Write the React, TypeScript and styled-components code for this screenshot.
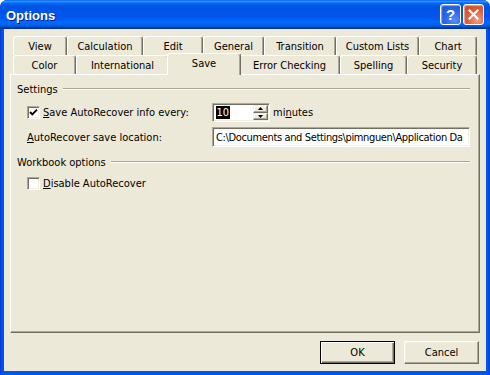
import React from "react";
import styled, { createGlobalStyle } from "styled-components";

const GlobalStyle = createGlobalStyle`
  html, body { margin: 0; padding: 0; background: #ffffff; }
  body {
    font-family: "DejaVu Sans Condensed", "DejaVu Sans", "Liberation Sans", sans-serif;
    font-size: 11px;
    color: #000;
  }
  * { box-sizing: border-box; }
`;

const Window = styled.div`
  width: 490px;
  height: 375px;
  display: flex;
  flex-direction: column;
  background: #0055ea;
  border-radius: 7px 7px 0 0;
  overflow: hidden;
`;

const TitleBar = styled.div`
  height: 29px;
  flex: none;
  display: flex;
  align-items: center;
  gap: 2px;
  padding: 0 6px 0 6px;
  background: linear-gradient(
    180deg,
    #0058ee 0%,
    #3593ff 4%,
    #288eff 6%,
    #127dff 8%,
    #036ffc 10%,
    #0262ee 14%,
    #0057e5 20%,
    #0054e3 24%,
    #0055eb 56%,
    #005bf5 66%,
    #026afe 76%,
    #0062ef 86%,
    #0052d6 92%,
    #0040ab 94%,
    #003092 100%
  );
`;

const TitleText = styled.div`
  flex: 1;
  color: #fff;
  font: bold 13px "Liberation Sans", Arial, sans-serif;
  text-shadow: 1px 1px 0 #0f1f8c;
  padding-top: 1px;
`;

const CaptionButton = styled.div<{ $kind: "help" | "close" }>`
  width: 21px;
  height: 21px;
  border: 1px solid #fff;
  border-radius: 3px;
  display: flex;
  align-items: center;
  justify-content: center;
  color: #fff;
  font: bold 15px "Liberation Sans", Arial, sans-serif;
  background: ${(p) =>
    p.$kind === "help"
      ? "radial-gradient(circle at 70% 80%, #5a8ef7 0%, #2c66ea 45%, #1d4fd8 100%)"
      : "radial-gradient(circle at 70% 80%, #f0a080 0%, #e2623c 45%, #c8401a 100%)"};
  box-shadow: inset 1px 1px 1px rgba(255, 255, 255, 0.5);
`;

const Frame = styled.div`
  flex: 1;
  min-width: 0;
  display: flex;
  padding: 0 4px 4px 4px;
  background: linear-gradient(90deg, #0831d9 0px, #0055ea 2px, #0055ea calc(100% - 2px), #0831d9 100%);
`;

const Client = styled.div`
  flex: 1;
  min-width: 0;
  display: flex;
  flex-direction: column;
  background: #ece9d8;
  padding: 7px 6px 0 6px;
`;

const TabStrip = styled.div`
  display: flex;
  flex-direction: column;
  padding: 0 3px;
`;

const TabRow = styled.div`
  display: flex;
  height: 19px;
`;

const Tab = styled.div<{ $w: number; $selected?: boolean }>`
  flex: none;
  width: ${(p) => (p.$selected ? p.$w + 4 : p.$w)}px;
  height: ${(p) => (p.$selected ? 22 : 19)}px;
  margin: ${(p) => (p.$selected ? "-2px -2px -1px -2px" : "0")};
  position: relative;
  z-index: ${(p) => (p.$selected ? 2 : 1)};
  display: flex;
  align-items: center;
  justify-content: center;
  padding-bottom: ${(p) => (p.$selected ? 2 : 0)}px;
  background: #ece9d8;
  border-top: 1px solid #fff;
  border-left: 1px solid #fff;
  border-right: 1px solid #716f64;
  border-radius: 3px 3px 0 0;
  box-shadow: inset -1px 0 0 #aca899;
  white-space: nowrap;
`;

const Panel = styled.div`
  flex: 1;
  min-width: 0;
  display: flex;
  flex-direction: column;
  border: 1px solid;
  border-color: #fff #716f64 #716f64 #fff;
  box-shadow: inset -1px -1px 0 #aca899;
  padding: 7px 9px 0 6px;
`;

const GroupHeader = styled.div<{ $top: number }>`
  display: flex;
  align-items: center;
  gap: 5px;
  height: 14px;
  margin-top: ${(p) => p.$top}px;
`;

const GroupLine = styled.div`
  flex: 1;
  height: 2px;
  border-top: 1px solid #aca899;
  border-bottom: 1px solid #fff;
`;

const FormRow = styled.div<{ $top: number; $h: number }>`
  display: flex;
  align-items: center;
  min-width: 0;
  padding-left: 10px;
  margin-top: ${(p) => p.$top}px;
  height: ${(p) => p.$h}px;
`;

const LabelCell = styled.div`
  width: 185px;
  flex: none;
  display: flex;
  align-items: center;
  gap: 3px;
  white-space: nowrap;
`;

const Label = styled.span`
  white-space: nowrap;
`;

const Key = styled.span`
  text-decoration: underline;
  text-underline-offset: 1px;
`;

const CheckBox = styled.div`
  width: 13px;
  height: 13px;
  flex: none;
  background: #fff;
  border: 1px solid;
  border-color: #aca899 #fff #fff #aca899;
  box-shadow: inset 1px 1px 0 #716f64, inset -1px -1px 0 #f1efe2;
  display: flex;
  align-items: center;
  justify-content: center;
`;

const Sunken = styled.div`
  background: #fff;
  border: 1px solid;
  border-color: #aca899 #fff #fff #aca899;
  box-shadow: inset 1px 1px 0 #716f64, inset -1px -1px 0 #f1efe2;
`;

const SpinBox = styled(Sunken)`
  width: 58px;
  height: 19px;
  flex: none;
  display: flex;
  padding: 1px;
`;

const SpinValue = styled.div`
  flex: 1;
  display: flex;
  align-items: center;
  padding-left: 2px;
`;

const Selected = styled.span`
  background: #000;
  color: #fff;
  line-height: 13px;
  padding: 0 0.5px;
`;

const SpinButtons = styled.div`
  width: 15px;
  display: flex;
  flex-direction: column;
`;

const SpinButton = styled.div`
  flex: 1;
  display: flex;
  align-items: center;
  justify-content: center;
  background: #ece9d8;
  border: 1px solid;
  border-color: #f1efe2 #716f64 #716f64 #f1efe2;
  box-shadow: inset -1px -1px 0 #aca899, inset 1px 1px 0 #fff;
`;

const Unit = styled.span`
  margin-left: 3px;
`;

const TextField = styled(Sunken)`
  flex: 1;
  min-width: 0;
  height: 20px;
  display: flex;
  align-items: center;
  padding: 0 2px 0 3px;
  overflow: hidden;
`;

const FieldText = styled.span`
  white-space: nowrap;
  overflow: hidden;
  letter-spacing: -0.36px;
`;

const ButtonRow = styled.div`
  flex: none;
  height: 38px;
  display: flex;
  justify-content: flex-end;
  gap: 9px;
  padding: 8px 1px 7px 0;
`;

const PushButton = styled.div<{ $default?: boolean }>`
  width: 75px;
  height: 23px;
  display: flex;
  align-items: center;
  justify-content: center;
  background: #ece9d8;
  border: 1px solid;
  border-color: ${(p) => (p.$default ? "#000" : "#fff #716f64 #716f64 #fff")};
  box-shadow: ${(p) =>
    p.$default
      ? "inset 1px 1px 0 #fff, inset -1px -1px 0 #716f64, inset -2px -2px 0 #aca899"
      : "inset -1px -1px 0 #aca899, inset 1px 1px 0 #f1efe2"};
`;

const topTabs: [string, number][] = [
  ["View", 54],
  ["Calculation", 76],
  ["Edit", 60],
  ["General", 61],
  ["Transition", 72],
  ["Custom Lists", 83],
  ["Chart", 58],
];

const bottomTabs: [string, number][] = [
  ["Color", 63],
  ["International", 93],
  ["Save", 70],
  ["Error Checking", 101],
  ["Spelling", 67],
  ["Security", 70],
];

const Check = () => (
  <svg width="9" height="9" viewBox="0 0 9 9">
    <path d="M1 4 L3.3 6.3 L8 1.6" fill="none" stroke="#000" strokeWidth="1.9" />
  </svg>
);

const Arrow = ({ up }: { up?: boolean }) => (
  <svg width="5" height="3" viewBox="0 0 5 3">
    <path d={up ? "M0 3 L2.5 0 L5 3 Z" : "M0 0 L2.5 3 L5 0 Z"} fill="#000" />
  </svg>
);

const CloseGlyph = () => (
  <svg width="11" height="11" viewBox="0 0 11 11">
    <path d="M1.5 1.5 L9.5 9.5 M9.5 1.5 L1.5 9.5" stroke="#fff" strokeWidth="2" strokeLinecap="square" />
  </svg>
);

export default function App() {
  return (
    <>
      <GlobalStyle />
      <Window>
        <TitleBar>
          <TitleText>Options</TitleText>
          <CaptionButton $kind="help">?</CaptionButton>
          <CaptionButton $kind="close">
            <CloseGlyph />
          </CaptionButton>
        </TitleBar>
        <Frame>
          <Client>
            <TabStrip>
              <TabRow>
                {topTabs.map(([t, w]) => (
                  <Tab key={t} $w={w}>
                    {t}
                  </Tab>
                ))}
              </TabRow>
              <TabRow>
                {bottomTabs.map(([t, w]) => (
                  <Tab key={t} $w={w} $selected={t === "Save"}>
                    {t}
                  </Tab>
                ))}
              </TabRow>
            </TabStrip>
            <Panel>
              <GroupHeader $top={0}>
                <Label>Settings</Label>
                <GroupLine />
              </GroupHeader>
              <FormRow $top={7} $h={19}>
                <LabelCell>
                  <CheckBox>
                    <Check />
                  </CheckBox>
                  <Label>
                    <Key>S</Key>ave AutoRecover info every:
                  </Label>
                </LabelCell>
                <SpinBox>
                  <SpinValue>
                    <Selected>10</Selected>
                  </SpinValue>
                  <SpinButtons>
                    <SpinButton>
                      <Arrow up />
                    </SpinButton>
                    <SpinButton>
                      <Arrow />
                    </SpinButton>
                  </SpinButtons>
                </SpinBox>
                <Unit>
                  mi<Key>n</Key>utes
                </Unit>
              </FormRow>
              <FormRow $top={5} $h={20}>
                <LabelCell>
                  <Label>
                    <Key>A</Key>utoRecover save location:
                  </Label>
                </LabelCell>
                <TextField>
                  <FieldText>C:\Documents and Settings\pimnguen\Application Da</FieldText>
                </TextField>
              </FormRow>
              <GroupHeader $top={8}>
                <Label>Workbook options</Label>
                <GroupLine />
              </GroupHeader>
              <FormRow $top={8} $h={13}>
                <LabelCell>
                  <CheckBox />
                  <Label>
                    <Key>D</Key>isable AutoRecover
                  </Label>
                </LabelCell>
              </FormRow>
            </Panel>
            <ButtonRow>
              <PushButton $default>OK</PushButton>
              <PushButton>Cancel</PushButton>
            </ButtonRow>
          </Client>
        </Frame>
      </Window>
    </>
  );
}
